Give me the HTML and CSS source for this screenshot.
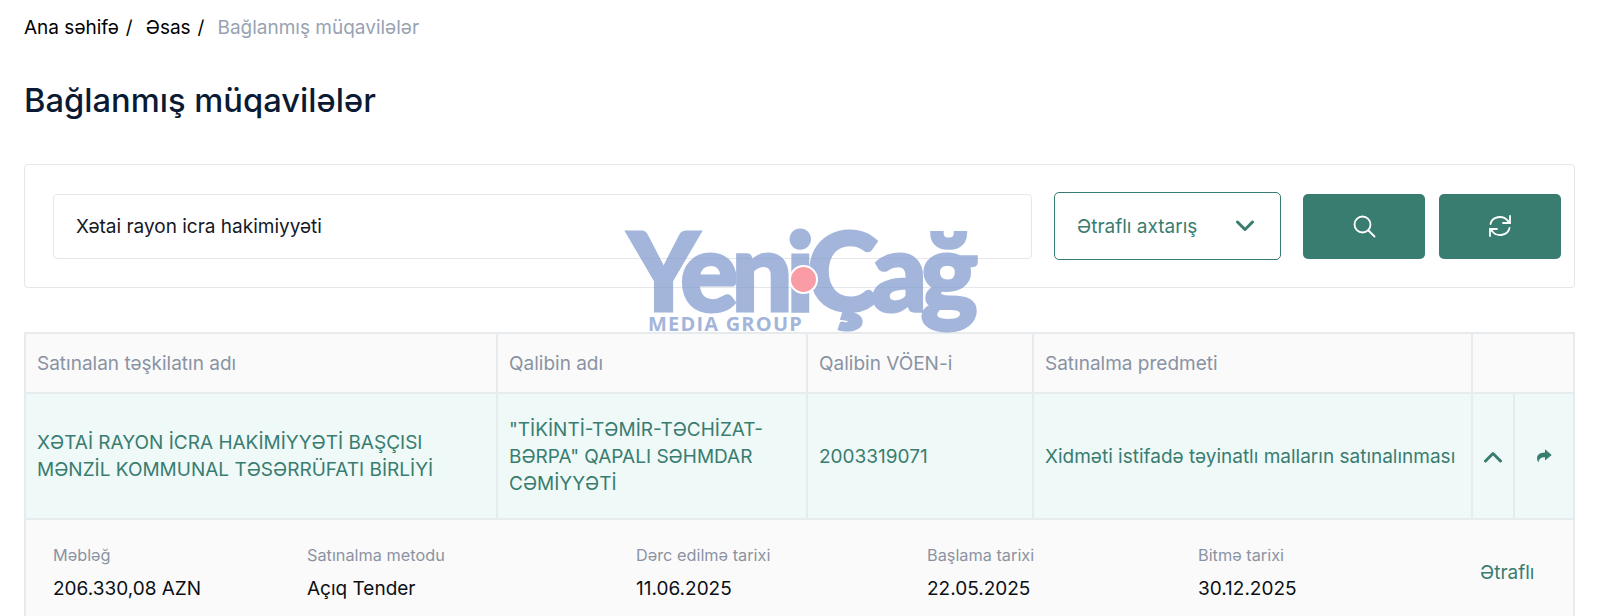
FILE: index.html
```html
<!DOCTYPE html>
<html lang="az">
<head>
  <meta charset="UTF-8">
  <meta name="viewport" content="width=device-width, initial-scale=1.0">
  <title>Bağlanmış müqavilələr</title>
  <link rel="stylesheet" href="styles.css">
</head>
<body>
  <div class="page">
    <nav class="breadcrumb">
      <a href="#">Ana səhifə</a><span class="sep">/</span>
      <a href="#">Əsas</a><span class="sep">/</span>
      <span class="current">Bağlanmış müqavilələr</span>
    </nav>

    <h1>Bağlanmış müqavilələr</h1>

    <div class="search-card">
      <div class="search-input">Xətai rayon icra hakimiyyəti</div>
      <button class="advanced">
        <span>Ətraflı axtarış</span>
        <svg width="20" height="12" viewBox="0 0 20 12" fill="none" stroke="#397c70" stroke-width="3" stroke-linecap="round" stroke-linejoin="round"><path d="M2.5 2l7.5 7.5L17.5 2"/></svg>
      </button>
      <button class="icon-btn" aria-label="Axtar">
        <svg width="24" height="24" viewBox="0 0 24 24" fill="none" stroke="#fff" stroke-width="1.8" stroke-linecap="round"><circle cx="10.5" cy="10.5" r="8"/><path d="M16.5 16.5l6 6"/></svg>
      </button>
      <button class="icon-btn" aria-label="Yenilə">
        <svg width="24" height="24" viewBox="0 0 24 24" fill="none" stroke="#fff" stroke-width="1.8" stroke-linecap="round" stroke-linejoin="round"><path d="M2.5 10a9.5 8.5 0 0 1 17-3.5L22 9"/><path d="M22 2v7h-7"/><path d="M21.5 14a9.5 8.5 0 0 1-17 3.5L2 15"/><path d="M2 22v-7h7"/></svg>
      </button>
    </div>

    <table class="contracts">
      <colgroup>
        <col class="c-org"><col class="c-win"><col class="c-voen"><col class="c-subj"><col class="c-tog"><col class="c-share">
      </colgroup>
      <thead>
        <tr>
          <th>Satınalan təşkilatın adı</th>
          <th>Qalibin adı</th>
          <th>Qalibin VÖEN-i</th>
          <th>Satınalma predmeti</th>
          <th colspan="2"></th>
        </tr>
      </thead>
      <tbody>
        <tr class="open-row">
          <td>XƏTAİ RAYON İCRA HAKİMİYYƏTİ BAŞÇISI MƏNZİL KOMMUNAL TƏSƏRRÜFATI BİRLİYİ</td>
          <td>"TİKİNTİ-TƏMİR-TƏCHİZAT-BƏRPA" QAPALI SƏHMDAR CƏMİYYƏTİ</td>
          <td>2003319071</td>
          <td>Xidməti istifadə təyinatlı malların satınalınması</td>
          <td class="cell-icon">
            <svg width="20" height="12" viewBox="0 0 20 12" fill="none" stroke="#397c70" stroke-width="3" stroke-linecap="round" stroke-linejoin="round"><path d="M2.5 10L10 2.5l7.5 7.5"/></svg>
          </td>
          <td class="cell-icon">
            <svg width="16" height="14" viewBox="0 0 16 14" fill="#397c70"><path d="M9 0.3L15.7 6L9 11.5V8.2C5.500 8.200 3 9.200 2.500 13.500C-0.300 9.500 0.500 3.700 9 3.500Z"/></svg>
          </td>
        </tr>
        <tr class="detail-row">
          <td colspan="6">
            <div class="detail">
              <div class="d-item d-amount"><span class="d-label">Məbləğ</span><span class="d-value">206.330,08 AZN</span></div>
              <div class="d-item d-method"><span class="d-label">Satınalma metodu</span><span class="d-value">Açıq Tender</span></div>
              <div class="d-item d-pub"><span class="d-label">Dərc edilmə tarixi</span><span class="d-value">11.06.2025</span></div>
              <div class="d-item d-start"><span class="d-label">Başlama tarixi</span><span class="d-value">22.05.2025</span></div>
              <div class="d-item d-end"><span class="d-label">Bitmə tarixi</span><span class="d-value">30.12.2025</span></div>
              <a class="more" href="#">Ətraflı</a>
            </div>
          </td>
        </tr>
      </tbody>
    </table>
  </div>

  <div class="watermark">
    <div class="wm-name">YeniÇağ</div>
    <div class="wm-group">MEDIA GROUP</div>
    <div class="wm-dot"></div>
  </div>
</body>
</html>
```

FILE: styles.css
```css
* {
  box-sizing: border-box;
}
html, body {
  height: 616px;
  overflow: hidden;
}
body {
  margin: 0;
  background: #fff;
  font-family: Inter, "Liberation Sans", sans-serif;
  color: #0b1220;
}
.page {
  padding: 15px 25px 0 24px;
}
.breadcrumb {
  display: flex;
  align-items: center;
  height: 24px;
  font-size: 19px;
}
.breadcrumb a {
  color: #000;
  text-decoration: none;
}
.breadcrumb .sep {
  margin: 0 13px 0 7px;
  color: #000;
}
.breadcrumb .current {
  color: #98a2b3;
}
h1 {
  margin: 39px 0 0;
  height: 44px;
  font-size: 32.7px;
  line-height: 44px;
  font-weight: 500;
  color: #0b1a33;
}
.search-card {
  display: flex;
  align-items: center;
  margin-top: 42px;
  height: 124px;
  padding: 0 13px 0 28px;
  border: 1px solid #e5e7eb;
  border-radius: 4px;
}
.search-input {
  flex: 1;
  height: 65px;
  line-height: 63px;
  padding-left: 22px;
  border: 1px solid #e5e7eb;
  border-radius: 4px;
  font-size: 19px;
  color: #14181f;
}
.advanced {
  display: flex;
  align-items: center;
  justify-content: space-between;
  width: 227px;
  height: 68px;
  margin-left: 22px;
  padding: 0 25px 0 22px;
  background: #fff;
  border: 1.5px solid #397c70;
  border-radius: 5px;
  font: 19px Inter, "Liberation Sans", sans-serif;
  color: #397c70;
}
.icon-btn {
  display: flex;
  align-items: center;
  justify-content: center;
  width: 122px;
  height: 65px;
  margin-left: 14px;
  background: #397c70;
  border: none;
  border-radius: 5px;
}
.advanced + .icon-btn {
  margin-left: 22px;
}
.contracts {
  width: 100%;
  margin-top: 44px;
  border-collapse: collapse;
  table-layout: fixed;
}
.c-org { width: 472px; }
.c-win { width: 310px; }
.c-voen { width: 226px; }
.c-subj { width: 439px; }
.c-tog { width: 42px; }
.contracts th,
.contracts td {
  border: 2px solid #e8ebee;
  padding: 0 10px 0 11px;
  text-align: left;
  font-size: 19px;
  font-weight: 400;
  line-height: 27px;
}
.contracts th {
  height: 60px;
  background: #fafafa;
  color: #8a93a3;
}
.open-row td {
  height: 126px;
  background: #eff9f8;
  color: #397c70;
}
.contracts .cell-icon {
  padding: 0;
  text-align: center;
}
.contracts .detail-row td {
  height: 120px;
  padding: 0;
  background: #fafafa;
  vertical-align: top;
}
.detail {
  display: flex;
  padding-top: 25px;
}
.d-item {
  display: flex;
  flex-direction: column;
  gap: 10px;
}
.d-amount { margin-left: 27px; width: 254px; }
.d-method { width: 329px; }
.d-pub { width: 291px; }
.d-start { width: 271px; }
.d-end { width: 282px; }
.d-label {
  font-size: 16.3px;
  line-height: 20px;
  color: #8a93a3;
}
.d-value {
  font-size: 19px;
  line-height: 27px;
  color: #0b0f14;
}
.more {
  align-self: flex-start;
  margin-top: 14px;
  font-size: 19px;
  color: #397c70;
  text-decoration: none;
}
/* logo over the page */
.watermark {
  position: absolute;
  left: 620px;
  top: 205px;
  width: 360px;
  height: 140px;
  pointer-events: none;
}
.wm-name {
  position: absolute;
  left: 8px;
  top: 34px;
  font-family: Lato, "Noto Sans", sans-serif;
  font-weight: 900;
  font-size: 108px;
  line-height: 60px;
  letter-spacing: -6.5px;
  white-space: nowrap;
  color: #7d97cb;
  -webkit-text-stroke: 3px #7d97cb;
  opacity: 0.7;
}
.wm-group {
  position: absolute;
  left: 28px;
  top: 107px;
  font-family: "Open Sans", sans-serif;
  font-weight: 700;
  font-size: 20px;
  line-height: 24px;
  letter-spacing: 1.2px;
  white-space: nowrap;
  color: #7d97cb;
  opacity: 0.7;
}
.wm-dot {
  position: absolute;
  left: 169px;
  top: 60px;
  width: 29px;
  height: 29px;
  border-radius: 50%;
  background: #fa9ca6;
  border: 2px solid #fff;
}
```
